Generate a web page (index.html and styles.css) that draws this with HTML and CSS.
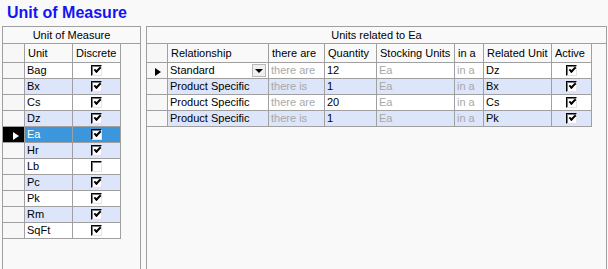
FILE: index.html
```html
<!DOCTYPE html>
<html lang="en">
<head>
    <meta charset="UTF-8">
    <title>Unit of Measure</title>
    <link rel="stylesheet" href="styles.css">
</head>
<body>
    <h1 class="title">Unit of Measure</h1>

    <div class="panels">
        <!-- Left: list of units -->
        <section class="panel units-panel">
            <div class="panel-caption">Unit of Measure</div>
            <table class="grid units-grid">
                <thead>
                    <tr>
                        <th class="row-head w-units-head"></th>
                        <th class="w-unit">Unit</th>
                        <th class="w-discrete">Discrete</th>
                    </tr>
                </thead>
                <tbody>
                    <tr><td class="row-head"></td><td>Bag</td><td class="check-cell"><span class="check on"></span></td></tr>
                    <tr><td class="row-head"></td><td>Bx</td><td class="check-cell"><span class="check on"></span></td></tr>
                    <tr><td class="row-head"></td><td>Cs</td><td class="check-cell"><span class="check on"></span></td></tr>
                    <tr><td class="row-head"></td><td>Dz</td><td class="check-cell"><span class="check on"></span></td></tr>
                    <tr class="selected"><td class="row-head"><span class="marker"></span></td><td>Ea</td><td class="check-cell"><span class="check on"></span></td></tr>
                    <tr><td class="row-head"></td><td>Hr</td><td class="check-cell"><span class="check on"></span></td></tr>
                    <tr><td class="row-head"></td><td>Lb</td><td class="check-cell"><span class="check"></span></td></tr>
                    <tr><td class="row-head"></td><td>Pc</td><td class="check-cell"><span class="check on"></span></td></tr>
                    <tr><td class="row-head"></td><td>Pk</td><td class="check-cell"><span class="check on"></span></td></tr>
                    <tr><td class="row-head"></td><td>Rm</td><td class="check-cell"><span class="check on"></span></td></tr>
                    <tr><td class="row-head"></td><td>SqFt</td><td class="check-cell"><span class="check on"></span></td></tr>
                </tbody>
            </table>
        </section>

        <!-- Right: units related to the selected one -->
        <section class="panel related-panel">
            <div class="panel-caption">Units related to Ea</div>
            <table class="grid related-grid">
                <thead>
                    <tr>
                        <th class="row-head w-rel-head"></th>
                        <th class="w-relationship">Relationship</th>
                        <th class="w-there">there are</th>
                        <th class="w-qty">Quantity</th>
                        <th class="w-stocking">Stocking Units</th>
                        <th class="w-ina">in a</th>
                        <th class="w-related">Related Unit</th>
                        <th class="w-active">Active</th>
                    </tr>
                </thead>
                <tbody>
                    <tr>
                        <td class="row-head"><span class="marker"></span></td>
                        <td class="combo-cell"><div class="combo"><span class="combo-text">Standard</span><span class="combo-btn"></span></div></td>
                        <td class="muted">there are</td>
                        <td>12</td>
                        <td class="muted">Ea</td>
                        <td class="muted">in a</td>
                        <td>Dz</td>
                        <td class="check-cell"><span class="check on"></span></td>
                    </tr>
                    <tr>
                        <td class="row-head"></td>
                        <td>Product Specific</td>
                        <td class="muted">there is</td>
                        <td>1</td>
                        <td class="muted">Ea</td>
                        <td class="muted">in a</td>
                        <td>Bx</td>
                        <td class="check-cell"><span class="check on"></span></td>
                    </tr>
                    <tr>
                        <td class="row-head"></td>
                        <td>Product Specific</td>
                        <td class="muted">there are</td>
                        <td>20</td>
                        <td class="muted">Ea</td>
                        <td class="muted">in a</td>
                        <td>Cs</td>
                        <td class="check-cell"><span class="check on"></span></td>
                    </tr>
                    <tr>
                        <td class="row-head"></td>
                        <td>Product Specific</td>
                        <td class="muted">there is</td>
                        <td>1</td>
                        <td class="muted">Ea</td>
                        <td class="muted">in a</td>
                        <td>Pk</td>
                        <td class="check-cell"><span class="check on"></span></td>
                    </tr>
                </tbody>
            </table>
        </section>
    </div>
</body>
</html>
```

FILE: styles.css
```css
/* Basic Styles */
body {
    margin: 0;
    height: 269px;
    overflow: hidden;
    background-color: #f9f9f9;
    font-family: "Liberation Sans", Arial, sans-serif;
    font-size: 11px;
    color: #000;
}

.title {
    margin: 0;
    padding: 3px 0 0 7px;
    height: 23px;
    font-size: 16px;
    line-height: 20px;
    font-weight: bold;
    color: #1414f5;
}

/* Panels */
.panels {
    display: flex;
    gap: 5px;
    padding-left: 2px;
}

.panel {
    box-sizing: border-box;
    height: 243px;
    border: 1px solid #a0a0a0;
    border-bottom: none;
    background-color: #f9f9f9;
}

.units-panel {
    width: 139px;
}

.related-panel {
    width: 461px;
}

.panel-caption {
    height: 16px;
    line-height: 16px;
    text-align: center;
    border-bottom: 1px solid #a0a0a0;
}

/* Grid Styling */
.grid {
    border-collapse: separate;
    border-spacing: 0;
    table-layout: fixed;
}

.units-grid {
    width: 118px;
}

.related-grid {
    width: 445px;
}

.grid th,
.grid td {
    box-sizing: border-box;
    height: 16px;
    padding: 0 0 0 2px;
    line-height: 15px;
    text-align: left;
    font-weight: normal;
    white-space: nowrap;
    overflow: hidden;
    border-right: 1px solid #a0a0a0;
    border-bottom: 1px solid #a0a0a0;
    background-color: #fff;
}

.grid th {
    height: 19px;
    padding-left: 3px;
    line-height: 18px;
    background-color: #f9f9f9;
}

.grid .row-head {
    padding: 0;
    background-color: #f7f7f7;
}

.w-units-head { width: 22px; }
.w-unit { width: 48px; }
.w-discrete { width: 48px; }

.w-rel-head { width: 21px; }
.w-relationship { width: 101px; }
.w-there { width: 56px; }
.w-qty { width: 52px; }
.w-stocking { width: 78px; }
.w-ina { width: 29px; }
.w-related { width: 68px; }
.w-active { width: 40px; }

.grid tbody tr:nth-child(even) td:not(.row-head) {
    background-color: #dce5f9;
}

.grid td.muted {
    color: #a8a8a8;
}

/* Selected row */
.grid tr.selected td {
    background-color: #3b96db;
    color: #fff;
}

.grid tr.selected td.row-head {
    background-color: #000;
}

/* Current row marker */
.marker {
    display: block;
    width: 0;
    height: 0;
    margin: 3px 0 0 8px;
    border-top: 4.5px solid transparent;
    border-bottom: 4.5px solid transparent;
    border-left: 6px solid #000;
}

.selected .marker {
    margin-left: 10px;
    border-left-color: #fff;
}

/* Checkboxes */
.grid td.check-cell {
    padding: 0;
    text-align: center;
}

.check {
    display: inline-block;
    box-sizing: border-box;
    width: 11px;
    height: 11px;
    margin-top: 2px;
    vertical-align: top;
    background-color: #fff;
    border-top: 1px solid #000;
    border-left: 1px solid #000;
    border-right: 1px solid #e4e4e4;
    border-bottom: 1px solid #e4e4e4;
    box-shadow: inset 1px 1px 0 #7a7a7a;
}

.check.on::after {
    content: "";
    display: block;
    width: 5px;
    height: 2px;
    margin: 1px 0 0 2px;
    border-left: 2px solid #000;
    border-bottom: 2px solid #000;
    transform: rotate(-45deg);
}

/* Combo box in the current row */
.grid td.combo-cell {
    padding: 0 2px 0 2px;
}

.combo {
    display: flex;
    align-items: center;
    height: 15px;
}

.combo-text {
    flex: 1;
}

.combo-btn {
    display: flex;
    align-items: center;
    justify-content: center;
    box-sizing: border-box;
    width: 14px;
    height: 13px;
    background-color: #f0f0f0;
    border: 1px solid #b8b8b8;
}

.combo-btn::after {
    content: "";
    width: 0;
    height: 0;
    border-left: 4px solid transparent;
    border-right: 4px solid transparent;
    border-top: 4px solid #000;
}
```
